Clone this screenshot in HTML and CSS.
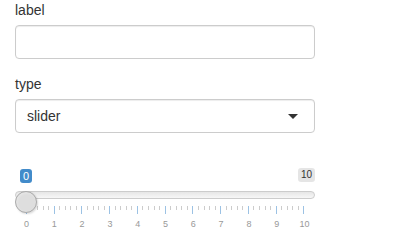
FILE: index.html
```html
<!DOCTYPE html>
<html>
<head>
<meta charset="utf-8">
<link rel="stylesheet" href="styles.css">
</head>
<body>
<div class="form">
  <div class="group">
    <label class="lbl">label</label>
    <div class="input"></div>
  </div>
  <div class="group">
    <label class="lbl">type</label>
    <div class="input select"><span class="sel-text">slider</span><span class="caret"></span></div>
  </div>
  <div class="slider">
    <div class="badges">
      <span class="single">0</span>
      <span class="max">10</span>
    </div>
    <div class="track-area">
      <div class="line"></div>
      <div class="handle"></div>
    </div>
    <div class="ticks" id="ticks"></div>
    <div class="nums">
      <span>0</span><span>1</span><span>2</span><span>3</span><span>4</span><span>5</span><span>6</span><span>7</span><span>8</span><span>9</span><span>10</span>
    </div>
  </div>
</div>
<script>
  var t = document.getElementById('ticks');
  for (var i = 0; i <= 50; i++) {
    var s = document.createElement('span');
    s.className = (i % 5 === 0) ? 'tick major' : 'tick';
    t.appendChild(s);
  }
</script>
</body>
</html>
```
FILE: styles.css
```css
html, body {
  margin: 0;
  padding: 0;
  background: #fff;
}
body {
  font-family: "Liberation Sans", Arial, sans-serif;
  color: #333;
  font-size: 14px;
  line-height: 20px;
}
.form {
  width: 300px;
  padding: 0 15px;
}
.group {
  margin-bottom: 15px;
}
.lbl {
  display: block;
  margin-bottom: 5px;
  font-size: 14px;
  line-height: 20px;
  color: #333;
}
.input {
  box-sizing: border-box;
  height: 34px;
  width: 300px;
  border: 1px solid #ccc;
  border-radius: 4px;
  box-shadow: inset 0 1px 1px rgba(0,0,0,0.075);
  background: #fff;
}
.select {
  display: flex;
  align-items: center;
  justify-content: space-between;
  padding: 0 16px 0 11px;
}
.sel-text {
  font-size: 14px;
  color: #333;
}
.caret {
  width: 0;
  height: 0;
  border-top: 5px solid #333;
  border-left: 5px solid transparent;
  border-right: 5px solid transparent;
}
.slider {
  padding-top: 20px;
  width: 300px;
}
.badges {
  display: flex;
  justify-content: space-between;
  align-items: flex-start;
  padding-left: 5px;
  height: 15px;
}
.single {
  background: #428bca;
  color: #fff;
  font-size: 11px;
  line-height: 12px;
  padding: 1px 3px;
  border-radius: 3px;
  margin-top: 1px;
}
.max {
  background: rgba(0,0,0,0.1);
  color: #333;
  font-size: 10px;
  line-height: 12px;
  padding: 1px 3px;
  border-radius: 3px;
}
.track-area {
  position: relative;
  height: 15px;
  margin-top: 3px;
}
.line {
  box-sizing: border-box;
  margin-top: 8px;
  height: 8px;
  border: 1px solid #ccc;
  border-radius: 8px;
  background: linear-gradient(to bottom, #dedede -50%, #fff 150%);
}
.handle {
  position: absolute;
  left: 0;
  top: 0;
  box-sizing: border-box;
  width: 22px;
  height: 22px;
  border: 1px solid #ababab;
  border-radius: 50%;
  background: #dedede;
  box-shadow: inset 1px 1px 3px rgba(255,255,255,0.3), 1px 1px 2px rgba(0,0,0,0.15);
}
.ticks {
  display: flex;
  justify-content: space-between;
  align-items: flex-start;
  height: 8px;
  padding: 0 10px 0 11px;
}
.tick {
  width: 1px;
  height: 4px;
  background: #ccc;
}
.tick.major {
  height: 8px;
  background: #9cc2e4;
}
.nums {
  display: flex;
  justify-content: space-between;
  margin-top: 5px;
  padding: 0 10px 0 11px;
  font-size: 9px;
  line-height: 11px;
  color: #999;
}
.nums span {
  width: 1px;
  display: flex;
  justify-content: center;
  white-space: nowrap;
}
```
